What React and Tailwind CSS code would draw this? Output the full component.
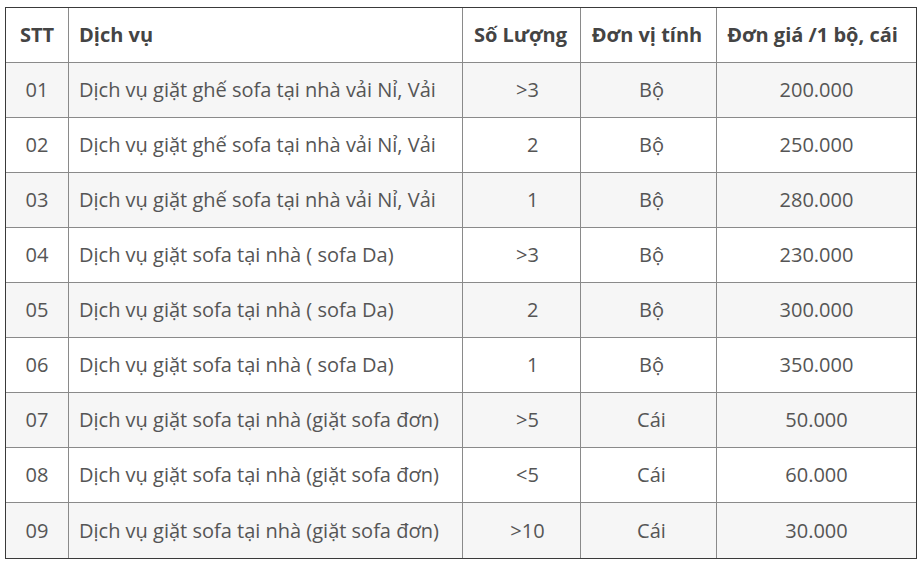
const rows = [
  { stt: '01', name: 'Dịch vụ giặt ghế sofa tại nhà vải Nỉ, Vải', qty: '>3', unit: 'Bộ', price: '200.000' },
  { stt: '02', name: 'Dịch vụ giặt ghế sofa tại nhà vải Nỉ, Vải', qty: '\u00a0\u00a02', unit: 'Bộ', price: '250.000' },
  { stt: '03', name: 'Dịch vụ giặt ghế sofa tại nhà vải Nỉ, Vải', qty: '\u00a0\u00a01', unit: 'Bộ', price: '280.000' },
  { stt: '04', name: 'Dịch vụ giặt sofa tại nhà ( sofa Da)', qty: '>3', unit: 'Bộ', price: '230.000' },
  { stt: '05', name: 'Dịch vụ giặt sofa tại nhà ( sofa Da)', qty: '\u00a0\u00a02', unit: 'Bộ', price: '300.000' },
  { stt: '06', name: 'Dịch vụ giặt sofa tại nhà ( sofa Da)', qty: '\u00a0\u00a01', unit: 'Bộ', price: '350.000' },
  { stt: '07', name: 'Dịch vụ giặt sofa tại nhà (giặt sofa đơn)', qty: '>5', unit: 'Cái', price: '50.000' },
  { stt: '08', name: 'Dịch vụ giặt sofa tại nhà (giặt sofa đơn)', qty: '<5', unit: 'Cái', price: '60.000' },
  { stt: '09', name: 'Dịch vụ giặt sofa tại nhà (giặt sofa đơn)', qty: '>10', unit: 'Cái', price: '30.000' },
];

const cell = 'h-[55px] border-[#8a8a8a] p-0 align-middle';

export default function App() {
  return (
    <div className="min-h-screen bg-white pl-[5px] pt-[7px]" style={{ fontFamily: '"Open Sans", sans-serif' }}>
      <div className="w-[912px] border border-[#3a3a3a]">
        <table className="w-full table-fixed border-separate border-spacing-0 text-[20px] text-[#555]">
          <colgroup>
            <col className="w-[63px]" />
            <col className="w-[394px]" />
            <col className="w-[118px]" />
            <col className="w-[136px]" />
            <col />
          </colgroup>
          <thead>
            <tr className="font-bold text-[#444]">
              <th className={`${cell} h-[54px] border-b border-r text-center`}>STT</th>
              <th className={`${cell} h-[54px] border-b border-r pl-[10px] text-left`}>Dịch vụ</th>
              <th className={`${cell} h-[54px] border-b border-r pr-[2px] text-center`}>Số Lượng</th>
              <th className={`${cell} h-[54px] border-b border-r pr-[3px] text-center`}>Đơn vị tính</th>
              <th className={`${cell} h-[54px] border-b pr-2 text-center`}>Đơn giá /1 bộ, cái</th>
            </tr>
          </thead>
          <tbody>
            {rows.map((r, i) => {
              const last = i === rows.length - 1;
              const b = last ? '' : 'border-b';
              return (
                <tr key={r.stt} className={i % 2 === 0 ? 'bg-[#f6f6f6]' : 'bg-white'}>
                  <td className={`${cell} ${b} border-r text-center`}>{r.stt}</td>
                  <td className={`${cell} ${b} border-r pl-[10px] text-left`}>{r.name}</td>
                  <td className={`${cell} ${b} border-r pl-3 text-center`}>{r.qty}</td>
                  <td className={`${cell} ${b} border-r pl-[6px] text-center`}>{r.unit}</td>
                  <td className={`${cell} ${b} text-center`}>{r.price}</td>
                </tr>
              );
            })}
          </tbody>
        </table>
      </div>
    </div>
  );
}
